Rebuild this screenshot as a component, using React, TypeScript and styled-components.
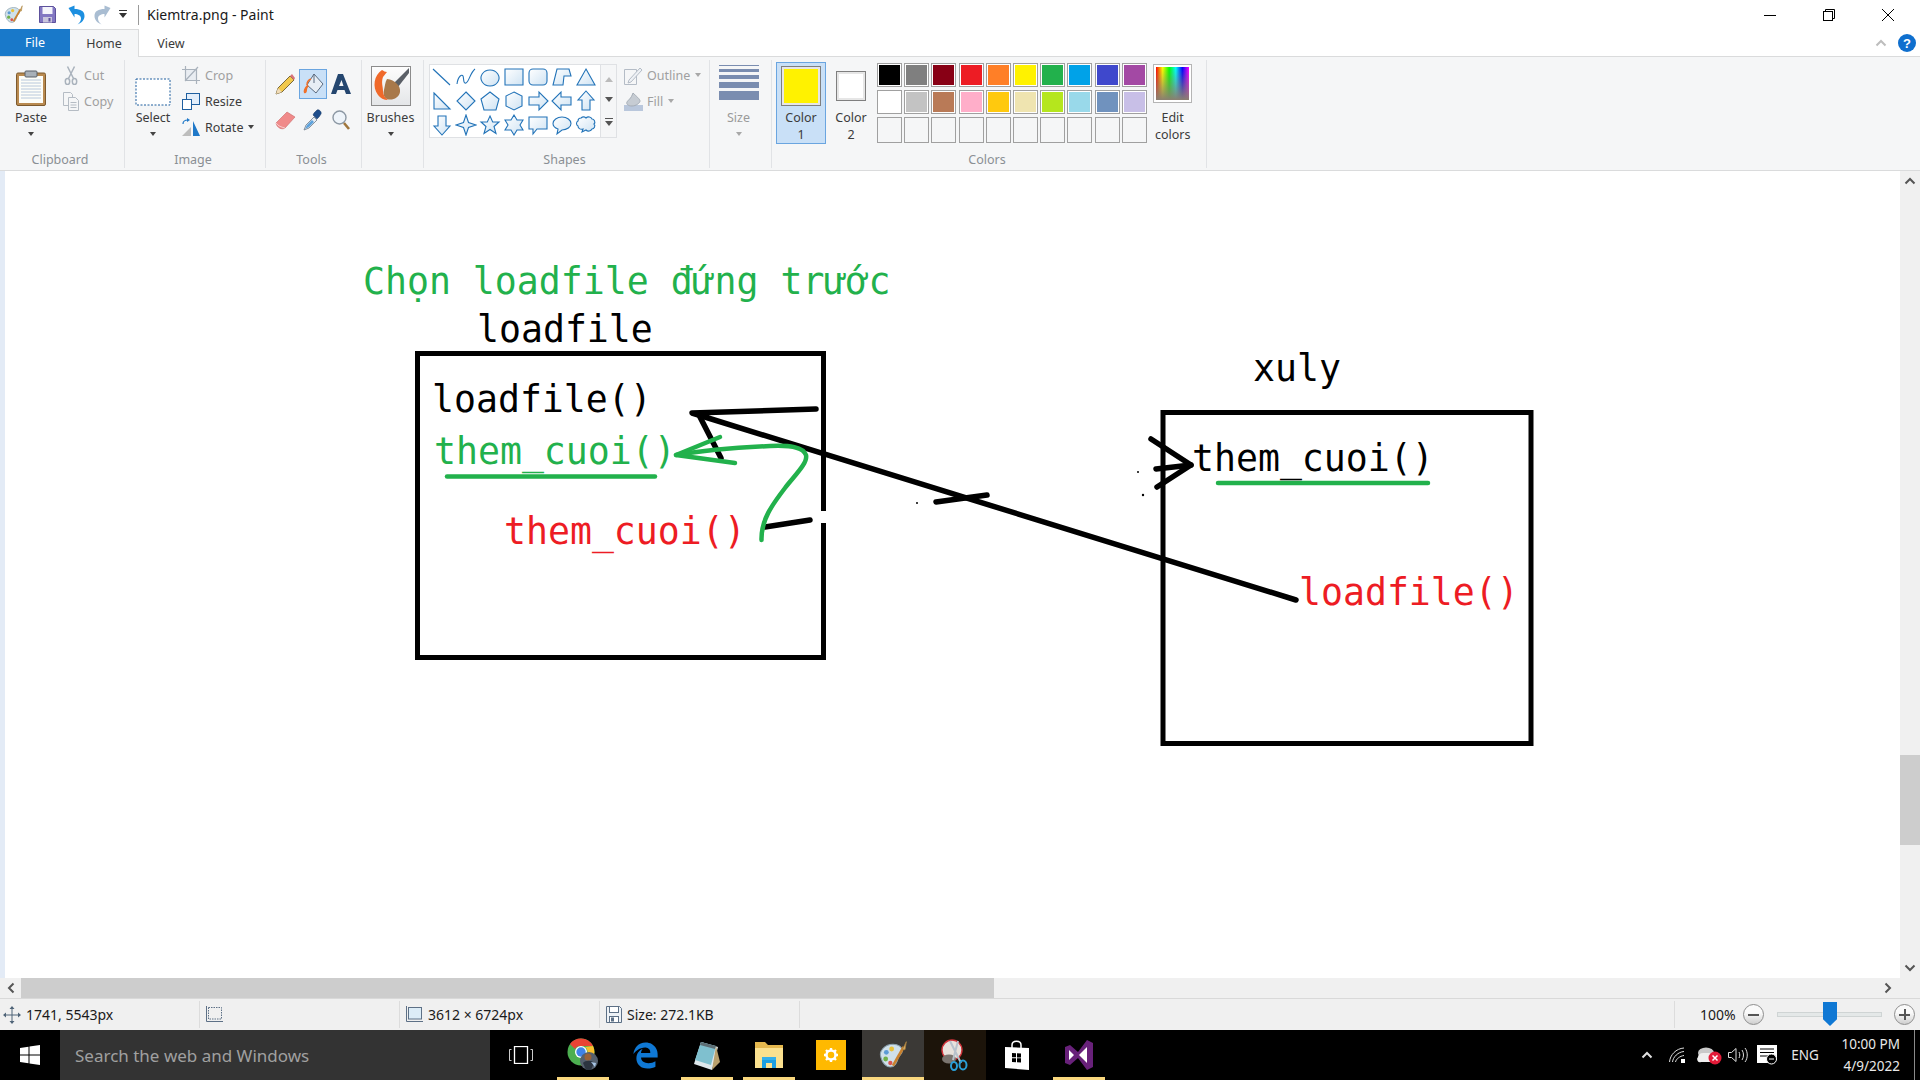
import React from 'react';
import styled, { createGlobalStyle } from 'styled-components';
import { FaEdgeLegacy } from 'react-icons/fa';

const GlobalStyle = createGlobalStyle`
  html, body {
    margin: 0;
    padding: 0;
    overflow: hidden;
    background: #fff;
  }
  * { box-sizing: border-box; }
`;

const UI_FONT = '"Noto Sans", "Liberation Sans", sans-serif';
const INK_FONT = '"DejaVu Sans Mono", monospace';

const Window = styled.div`
  width: 1920px;
  height: 1080px;
  display: flex;
  flex-direction: column;
  font-family: ${UI_FONT};
  font-size: 13px;
  color: #3b3b3b;
`;

/* title bar */
const TitleBar = styled.div`
  height: 29px;
  display: flex;
  align-items: center;
  background: #fff;
`;

const QuickIcons = styled.div`
  display: flex;
  align-items: center;
  width: 139px;
  height: 20px;
  border-right: 1px solid #9a9a9a;
`;

const QuickSlot = styled.div<{ $w: number }>`
  width: ${(p) => p.$w}px;
  height: 20px;
  display: flex;
  align-items: center;
  justify-content: center;
`;

const TitleText = styled.div`
  margin-left: 8px;
  color: #1a1a1a;
  font-size: 14px;
`;

const WinButtons = styled.div`
  margin-left: auto;
  display: flex;
  padding-right: 3px;
`;

const WinButton = styled.div`
  width: 59px;
  height: 29px;
  display: flex;
  align-items: center;
  justify-content: center;
`;

/* tabs */
const TabRow = styled.div`
  height: 28px;
  display: flex;
  align-items: stretch;
  background: #fff;
  border-bottom: 1px solid #dadbdc;
`;

const FileTab = styled.div`
  width: 70px;
  background: #1979ca;
  color: #fff;
  display: flex;
  align-items: center;
  justify-content: center;
  font-size: 12.5px;
`;

const Tab = styled.div<{ $active?: boolean }>`
  width: ${(p) => (p.$active ? 69 : 64)}px;
  height: 29px;
  padding-bottom: ${(p) => (p.$active ? 2 : 0)}px;
  display: flex;
  align-items: center;
  justify-content: center;
  font-size: 12.5px;
  color: #3b3b3b;
  background: ${(p) => (p.$active ? '#f5f6f7' : 'transparent')};
  border: ${(p) => (p.$active ? '1px solid #dadbdc' : 'none')};
  border-bottom: none;
  border-left: none;
`;

const TabTools = styled.div`
  margin-left: auto;
  display: flex;
  align-items: center;
  gap: 11px;
  padding-right: 4px;
`;

/* ribbon */
const Ribbon = styled.div`
  height: 114px;
  padding-top: 3px;
  display: flex;
  background: #f5f6f7;
  border-bottom: 1px solid #dadbdc;
`;

const Group = styled.div<{ $w: number }>`
  width: ${(p) => p.$w}px;
  height: 108px;
  display: flex;
  flex-direction: column;
  border-right: 1px solid #e1e3e6;
`;

const GroupBody = styled.div`
  height: 92px;
  display: flex;
`;

const GroupLabel = styled.div`
  height: 16px;
  line-height: 16px;
  text-align: center;
  padding-right: 4px;
  font-size: 12.5px;
  color: #8a8f94;
`;

const LargeTool = styled.div<{ $w: number; $selected?: boolean }>`
  width: ${(p) => p.$w}px;
  display: flex;
  flex-direction: column;
  align-items: center;
`;

const LargeIcon = styled.div`
  height: 49px;
  width: 100%;
  display: flex;
  align-items: flex-end;
  justify-content: center;
  padding-bottom: 3px;
`;

const LargeText = styled.div<{ $muted?: boolean }>`
  line-height: 17px;
  font-size: 12.5px;
  text-align: center;
  color: ${(p) => (p.$muted ? '#9a9a9a' : '#3b3b3b')};
`;

const Caret = styled.div<{ $muted?: boolean }>`
  width: 0;
  height: 0;
  margin: 6px auto 0;
  border-left: 3.5px solid transparent;
  border-right: 3.5px solid transparent;
  border-top: 4px solid ${(p) => (p.$muted ? '#a8a8a8' : '#444')};
`;

const SmallColumn = styled.div`
  padding-top: 2px;
  display: flex;
  flex-direction: column;
`;

const SmallRow = styled.div<{ $slot: number; $muted?: boolean }>`
  height: 26px;
  display: flex;
  align-items: center;
  font-size: 12.5px;
  color: ${(p) => (p.$muted ? '#a0a0a0' : '#3b3b3b')};

  & > svg:first-child {
    width: ${(p) => p.$slot - 4}px;
    margin-right: 4px;
    flex: none;
  }
`;

const InlineCaret = styled(Caret)`
  margin: 0 0 0 5px;
`;

const ToolGrid = styled.div`
  padding: 9px 0 0 5px;
  display: grid;
  grid-template-columns: repeat(3, 28px);
  grid-auto-rows: 30px;
  row-gap: 6px;
`;

const ToolCell = styled.div<{ $selected?: boolean }>`
  display: flex;
  align-items: center;
  justify-content: center;
  background: ${(p) => (p.$selected ? '#c9e0f7' : 'transparent')};
  border: 1px solid ${(p) => (p.$selected ? '#6aa5e0' : 'transparent')};
`;

const BrushFrame = styled.div`
  width: 40px;
  height: 40px;
  background: linear-gradient(#fdfdfd, #e4e6e8);
  border: 1px solid #8c8c8c;
`;

const Gallery = styled.div`
  margin: 4px 0 0 5px;
  height: 74px;
  display: flex;
`;

const ShapeGrid = styled.div`
  width: 172px;
  padding: 0;
  display: grid;
  grid-template-columns: repeat(7, 24px);
  grid-auto-rows: 24px;
  background: #fff;
  border: 1px solid #dfe1e4;
`;

const ShapeCell = styled.div`
  display: flex;
  align-items: center;
  justify-content: center;
`;

const GalleryScroll = styled.div`
  width: 16px;
  display: flex;
  flex-direction: column;
  align-items: center;
  justify-content: space-around;
  padding: 3px 0;
  border: 1px solid #dfe1e4;
  border-left: none;
`;

const ShapeOptions = styled.div`
  margin-left: 7px;
  padding-top: 2px;
  display: flex;
  flex-direction: column;
`;

const SizeLines = styled.div`
  width: 40px;
  display: flex;
  flex-direction: column;
`;

const SizeLine = styled.div<{ $h: number; $gap: number }>`
  height: ${(p) => p.$h}px;
  margin-top: ${(p) => p.$gap}px;
  background: #7a8db0;
`;

const SizeIcon = styled.div`
  height: 49px;
  padding-top: 5px;
  display: flex;
  justify-content: center;
`;

const ColorTool = styled.div<{ $w: number; $selected?: boolean }>`
  width: ${(p) => p.$w}px;
  height: 82px;
  margin: 2px 0 0 ${(p) => (p.$selected ? 4 : 2)}px;
  display: flex;
  flex-direction: column;
  align-items: center;
  background: ${(p) => (p.$selected ? '#c9e0f7' : 'transparent')};
  border: 1px solid ${(p) => (p.$selected ? '#6aa5e0' : 'transparent')};
`;

const ColorIconArea = styled.div`
  height: 47px;
  display: flex;
  align-items: center;
  justify-content: center;
`;

const ColorSwatch = styled.div<{ $size: number; $fill: string }>`
  width: ${(p) => p.$size}px;
  height: ${(p) => p.$size}px;
  background: ${(p) => p.$fill};
  border: 1px solid #7f7f7f;
  box-shadow: inset 0 0 0 2px #e6e6e6;
`;

const Palette = styled.div`
  margin: 3px 0 0 3px;
  display: grid;
  grid-template-columns: repeat(10, 25px);
  grid-template-rows: 24px 24px 26px;
  column-gap: 2.2px;
  row-gap: 3px;
`;

const PaletteCell = styled.div<{ $fill?: string }>`
  background: ${(p) => p.$fill || 'transparent'};
  border: 1px solid #a0a0a0;
  box-shadow: ${(p) => (p.$fill ? 'inset 0 0 0 1px #fff' : 'none')};
`;

const Spectrum = styled.div`
  width: 37px;
  height: 37px;
  border: 2px solid #fff;
  outline: 1px solid #b5b5b5;
  background:
    linear-gradient(rgba(128, 128, 128, 0), #8a7f70),
    linear-gradient(90deg, #f00, #ff0, #0f0, #0ff, #00f, #f0f);
`;

const EditTool = styled.div`
  width: 46px;
  margin-left: 3px;
  display: flex;
  flex-direction: column;
  align-items: center;
`;

const SpectrumArea = styled.div`
  height: 49px;
  padding-top: 5px;
`;

/* drawing area */
const Workspace = styled.div`
  flex: 1;
  display: flex;
  min-height: 0;
`;

const Canvas = styled.div`
  flex: 1;
  position: relative;
  overflow: hidden;
  background: #fff;
  border-left: 5px solid #e3ebf6;
`;

const InkLayer = styled.svg`
  position: absolute;
  left: -5px;
  top: 0;
`;

const InkText = styled.div<{ $x: number; $y: number; $color: string }>`
  position: absolute;
  left: ${(p) => p.$x - 5}px;
  top: ${(p) => p.$y - 171 - 29.5}px;
  font-family: ${INK_FONT};
  font-size: 36.5px;
  line-height: 36px;
  white-space: pre;
  color: ${(p) => p.$color};
`;

const VScroll = styled.div`
  width: 20px;
  display: flex;
  flex-direction: column;
  align-items: center;
  background: #f0f0f0;
`;

const ScrollEnd = styled.div`
  width: 20px;
  height: 20px;
  display: flex;
  align-items: center;
  justify-content: center;
`;

const VTrack = styled.div`
  flex: 1;
  width: 100%;
  padding-top: 564px;
`;

const VThumb = styled.div`
  height: 90px;
  background: #cdcdcd;
`;

const HScroll = styled.div`
  height: 20px;
  display: flex;
  background: #f0f0f0;
`;

const HThumb = styled.div`
  width: 973px;
  background: #cdcdcd;
`;

const HEnd = styled.div<{ $end?: boolean }>`
  width: 21px;
  margin: ${(p) => (p.$end ? '0 22px 0 auto' : '0')};
  display: flex;
  align-items: center;
  justify-content: center;
`;

/* status bar */
const StatusBar = styled.div`
  height: 32px;
  display: flex;
  background: #f0f0f0;
  border-top: 1px solid #d9d9d9;
  color: #1a1a1a;
  font-size: 14px;
`;

const StatusCell = styled.div<{ $w: number; $indent: number }>`
  width: ${(p) => p.$w}px;
  margin: 2px 0;
  padding-left: ${(p) => p.$indent}px;
  display: flex;
  align-items: center;
  gap: 5px;
  border-right: 1px solid #dcdcdc;
`;

const ZoomArea = styled.div`
  margin: 2px 0 2px auto;
  width: 246px;
  padding-left: 25px;
  display: flex;
  align-items: center;
  border-left: 1px solid #dcdcdc;
`;

const ZoomValue = styled.div`
  width: 43px;
`;

const ZoomButton = styled.div`
  width: 21px;
  height: 21px;
  border-radius: 50%;
  border: 1px solid #8f8f8f;
  background: linear-gradient(#fafafa 40%, #cfcfcf);
  display: flex;
  align-items: center;
  justify-content: center;
  color: #555;
`;

const ZoomSign = styled.div<{ $plus?: boolean }>`
  position: relative;
  width: 11px;
  height: 2px;
  background: #555;

  &::after {
    content: '';
    display: ${(p) => (p.$plus ? 'block' : 'none')};
    position: absolute;
    left: 4.5px;
    top: -4.5px;
    width: 2px;
    height: 11px;
    background: #555;
  }
`;

const ZoomTrack = styled.div`
  position: relative;
  width: 105px;
  height: 5px;
  margin: 0 12px 0 13px;
  background: #e4e8e8;
  border: 1px solid #cfd4d4;
`;

const ZoomThumb = styled.div`
  position: absolute;
  left: 45px;
  top: -11px;
  width: 14px;
  height: 24px;
  background: #0f78d4;
  clip-path: polygon(0 0, 100% 0, 100% 72%, 50% 100%, 0 72%);
`;

/* taskbar */
const Taskbar = styled.div`
  height: 50px;
  display: flex;
  background: #000;
`;

const StartButton = styled.div`
  width: 60px;
  display: flex;
  align-items: center;
  justify-content: center;
`;

const SearchBox = styled.div`
  width: 430px;
  padding-left: 15px;
  display: flex;
  align-items: center;
  background: #333;
  color: #a0a0a0;
  font-size: 17px;
`;

const TaskButton = styled.div<{ $open?: boolean; $tint?: string }>`
  position: relative;
  width: 62px;
  display: flex;
  align-items: center;
  justify-content: center;
  background: ${(p) => p.$tint || 'transparent'};

  &::after {
    content: '';
    display: ${(p) => (p.$open ? 'block' : 'none')};
    position: absolute;
    left: ${(p) => (p.$tint === '#3b3936' ? 0 : 5)}px;
    right: ${(p) => (p.$tint === '#3b3936' ? 0 : 5)}px;
    bottom: 0;
    height: 3px;
    background: #f9d77e;
  }
`;

const Tray = styled.div`
  margin-left: auto;
  display: flex;
  color: #fff;
`;

const TraySlot = styled.div<{ $w: number }>`
  width: ${(p) => p.$w}px;
  display: flex;
  align-items: center;
  justify-content: center;
`;

const TrayLabel = styled(TraySlot)`
  font-size: 13.5px;
  color: #e8e8e8;
`;

const Clock = styled.div`
  width: 89px;
  padding-right: 14px;
  display: flex;
  flex-direction: column;
  justify-content: center;
  align-items: flex-end;
  font-size: 13.5px;
  line-height: 22px;
  color: #e8e8e8;
`;

const DesktopPeek = styled.div`
  width: 6px;
  border-left: 1px solid #8a8a8a;
`;

const PaintIcon: React.FC<{ size: number }> = ({ size }) => (
  <svg width={size} height={size} viewBox="0 0 24 24">
    <path d="M3 14c-2-5 3-10 9-10 4 0 7 2 7 5 0 2-2 3-3 5-1 3-2 7-6 7-3 0-6-3-7-7z" fill="#cfe0ea" stroke="#8aa0ac" strokeWidth="0.8" />
    <circle cx="7" cy="10" r="1.8" fill="#5b9bd5" />
    <circle cx="11" cy="7.5" r="1.8" fill="#e9c13a" />
    <circle cx="6.5" cy="15" r="1.8" fill="#6fb04a" />
    <circle cx="10" cy="18" r="1.6" fill="#d9534f" />
    <path d="M12 20l8-14" stroke="#c9812e" strokeWidth="2" />
    <path d="M19 8l3-6-1 6z" fill="#d8b06a" stroke="#a37a3a" strokeWidth="0.6" />
  </svg>
);

const SaveIcon = () => (
  <svg width="17" height="17" viewBox="0 0 17 17">
    <path d="M0.5 0.5h14l2 2v14h-16z" fill="#8277c2" stroke="#5d519c" />
    <rect x="3.5" y="1" width="10" height="7" fill="#f4f4fb" />
    <rect x="4" y="11" width="9" height="5.5" fill="#c9c6dd" />
    <rect x="9.5" y="12" width="2" height="3.5" fill="#5d519c" />
  </svg>
);

const ArrowIcon: React.FC<{ color: string; flip?: boolean }> = ({ color, flip }) => (
  <svg width="17" height="20" viewBox="0 0 17 20" style={flip ? { transform: 'scaleX(-1)' } : undefined}>
    <path d="M0.5 3l6-2.5v3.5c6 0 10 2 10 7 0 4-3 7-7 8.500 2.500-2 3.500-4 3.500-6 0-3-3-4.500-6.500-4.500v3.500z" fill={color} />
  </svg>
);

const ClipboardIcon = () => (
  <svg width="30" height="36" viewBox="0 0 30 36">
    <rect x="0.5" y="3" width="29" height="32.500" rx="1.500" fill="#b98a50" stroke="#7d5a2e" />
    <rect x="3" y="6" width="24" height="27" fill="#fdfdf8" />
    {[10, 13, 16, 19, 22, 25, 28].map((y) => (
      <path key={y} d="M5 0h20" transform={`translate(0 ${y})`} stroke="#b8c8dc" />
    ))}
    <rect x="9" y="1" width="12" height="6" rx="1" fill="#a8b0b8" stroke="#5a6068" />
  </svg>
);

const CutIcon = () => (
  <svg width="13" height="19" viewBox="0 0 13 19" fill="none" stroke="#a9b2bc" strokeWidth="1.5">
    <path d="M3 0.500l6 12M10 0.500l-6 12" />
    <ellipse cx="3" cy="15.500" rx="2.200" ry="3" />
    <ellipse cx="10" cy="15.500" rx="2.200" ry="3" />
  </svg>
);

const CopyIcon = () => (
  <svg width="16" height="19" viewBox="0 0 16 19" fill="#f5f6f7" stroke="#b5bcc4">
    <path d="M0.500 0.500h7l2 2v11h-9z" />
    <path d="M5.500 5.500h7l3 3v10h-10z" />
    <path d="M7.500 10.500h6M7.500 13h6M7.500 15.500h6" />
  </svg>
);

const SelectIcon = () => (
  <svg width="36" height="28" viewBox="0 0 36 28">
    <rect x="1" y="1" width="34" height="26" fill="#fff" stroke="#1f5f9f" strokeDasharray="2 1.500" />
  </svg>
);

const CropIcon = () => (
  <svg width="18" height="18" viewBox="0 0 18 18" fill="none" stroke="#a9b2bc" strokeWidth="1.200">
    <rect x="4" y="4" width="10" height="10" fill="#e9edf2" stroke="none" />
    <path d="M3.500 0v14.500H18M0 3.500h14.500V18M3 15L16 1" />
  </svg>
);

const ResizeIcon = () => (
  <svg width="18" height="17" viewBox="0 0 18 17" fill="#fff" stroke="#1f5f9f">
    <rect x="4.500" y="0.500" width="13" height="11" fill="#e3eefa" />
    <rect x="0.500" y="6.500" width="9" height="10" />
  </svg>
);

const RotateIcon = () => (
  <svg width="18" height="18" viewBox="0 0 18 18">
    <path d="M0 18l9-9v9z" fill="#bdbdbd" />
    <path d="M11 18V3l7 15z" fill="#1f78c8" />
    <path d="M1 6c0-3 2-4 5-4" fill="none" stroke="#1f78c8" strokeWidth="1.200" />
    <path d="M5 0l3 2-3 2z" fill="#1f78c8" />
  </svg>
);

const PencilIcon = () => (
  <svg width="20" height="21" viewBox="0 0 20 21">
    <path d="M1 20l2-6L15 2l4 4L7 18z" fill="#f2c94c" stroke="#5a4a20" strokeWidth="0.800" />
    <path d="M1 20l2-6 4 4z" fill="#f1dcb8" />
    <path d="M15 2l4 4 1-2-3-4z" fill="#d9737a" />
  </svg>
);

const FillIcon = () => (
  <svg width="22" height="22" viewBox="0 0 22 22">
    <path d="M12 1l9 10-7 9-9-8z" fill="#e8eef5" stroke="#5a6b80" />
    <path d="M12 1v9" stroke="#5a6b80" />
    <path d="M5 12c-3 3-4 6-3 8 2 1 3-1 3-3 0-2 1-3 2-4z" fill="#f0702a" />
    <path d="M9 6c-3 1-4 4-4 6" fill="none" stroke="#f0702a" strokeWidth="1.500" />
  </svg>
);

const EraserIcon = () => (
  <svg width="21" height="19" viewBox="0 0 21 19">
    <path d="M1 12L12 1l8 5-10 11c-3 2-8 0-9-5z" fill="#f08a8a" stroke="#c96a6a" strokeWidth="0.600" />
    <path d="M1 12c2 3 5 4 9 5" fill="none" stroke="#fff" strokeWidth="0.800" opacity="0.7" />
  </svg>
);

const PickerIcon = () => (
  <svg width="20" height="22" viewBox="0 0 20 22">
    <path d="M1 21l2-5 8-8 3 3-8 8z" fill="#e6edf4" stroke="#6d7b8a" strokeWidth="0.800" />
    <path d="M2 20l2-4 5-5 2 2-5 5z" fill="#5da2dc" />
    <path d="M10 6l4 4 2-2 2-3c1-2-2-5-4-4l-3 3z" fill="#1f4e8c" stroke="#13345f" strokeWidth="0.500" />
  </svg>
);

const MagnifierIcon = () => (
  <svg width="18" height="20" viewBox="0 0 18 20" fill="none">
    <circle cx="7.500" cy="7.500" r="6.500" fill="#eef4fa" stroke="#8c98a4" strokeWidth="1.400" />
    <path d="M12 13l5 6" stroke="#a0763c" strokeWidth="2.600" />
  </svg>
);

const BrushIcon = () => (
  <svg width="38" height="38" viewBox="0 0 38 38">
    <path d="M37 1L22 16l4 4L37 6z" fill="#5a5f66" />
    <path d="M15 12c8 1 14 7 13 13-1 6-8 9-13 7-3-1-4-5-3-9 1-4 1-8 3-11z" fill="#a9794a" />
    <path d="M10 3C2 8 0 20 6 28c2 3 6 5 10 5-3-2-5-5-5-9 0-5-2-8 0-14l4-5c-2 0-3-1-5-2z" fill="#f0692a" />
  </svg>
);

const shapeFill = 'url(#shapeFill)';
const SHAPE_PATHS = [
  'M2 3l17 16',
  'M2 18c1-8 5-10 6-8s0 8 3 7 4-10 9-14',
  'M11 4a9 8 0 1 0 .01 0z',
  'M2 3h18v16H2z',
  'M6 3h10a4 4 0 0 1 4 4v8a4 4 0 0 1-4 4H6a4 4 0 0 1-4-4V7a4 4 0 0 1 4-4z',
  'M6 3h12l2 7h-7l-1 9H2z',
  'M11 3l9 16H2z',
  'M3 3l16 16H3z',
  'M11 2l9 9-9 9-9-9z',
  'M11 2l9 7-3 11H5L2 9z',
  'M11 2l8 4v10l-8 4-8-4V6z',
  'M2 7h10V2l9 9-9 9v-5H2z',
  'M20 7H10V2l-9 9 9 9v-5h10z',
  'M11 1l8 9h-4v10H7V10H3z',
  'M7 2h8v10h4l-8 9-8-9h4z',
  'M11 1l2.500 7.500L21 11l-7.500 2.500L11 21l-2.500-7.500L1 11l7.500-2.500z',
  'M11 2l2.700 6H20l-5 4.500 2 7-6-4-6 4 2-7L2 8h6.300z',
  'M11 1l3 5h6l-3 5 3 5h-6l-3 5-3-5H2l3-5-3-5h6z',
  'M2 3h18v12H10l-4 5v-5H2z',
  'M11 3c5 0 9 3 9 6.500S16 16 11 16l-5 4 1-5c-3-1-5-3-5-5.500C2 6 6 3 11 3z',
  'M6 4c2-2 4-1 5 0 2-2 5-1 6 1 2 0 4 3 2 5 2 2 0 5-2 5-1 2-4 3-6 1l-4 2 1-3c-3 1-5-1-5-3-2-1-2-4 0-5 0-2 1-3 3-3z',
];

const ShapeIcon: React.FC<{ d: string; open?: boolean }> = ({ d, open }) => (
  <svg width="22" height="22" viewBox="0 0 22 22">
    <path d={d} fill={open ? 'none' : shapeFill} stroke="#2273b8" strokeWidth="1.100" />
  </svg>
);

const OutlineIcon = () => (
  <svg width="19" height="19" viewBox="0 0 19 19" fill="none" stroke="#b4bcc6">
    <path d="M0.500 3.500h12v15H0.500z" fill="#f5f6f7" />
    <path d="M5 14l-1 3 3-1L18 4l-2-2z" fill="#eef1f5" />
  </svg>
);

const FillOffIcon = () => (
  <svg width="19" height="19" viewBox="0 0 19 19">
    <rect x="0" y="13" width="19" height="6" fill="#b9c7dc" />
    <path d="M9 1c3 3 7 6 7 8s-4 5-8 5-6-2-5-4 4-3 6-9z" fill="#c6ccd3" stroke="#a5adb6" />
  </svg>
);

const ChevronIcon: React.FC<{ dir: 'up' | 'down' | 'left' | 'right'; color?: string }> = ({ dir, color = '#555' }) => {
  const angle = { up: 0, right: 90, down: 180, left: 270 }[dir];
  return (
    <svg width="12" height="12" viewBox="0 0 12 12" style={{ transform: `rotate(${angle}deg)` }}>
      <path d="M1.500 8.500L6 4l4.500 4.500" fill="none" stroke={color} strokeWidth="2" />
    </svg>
  );
};

const MoveIcon = () => (
  <svg width="18" height="18" viewBox="0 0 18 18" fill="#4f6478" stroke="#4f6478">
    <path d="M9 1v16M1 9h16" fill="none" />
    <path d="M9 0l2.500 3h-5zM9 18l2.500-3h-5zM0 9l3-2.500v5zM18 9l-3-2.500v5z" stroke="none" />
  </svg>
);

const SelectionStatusIcon = () => (
  <svg width="18" height="18" viewBox="0 0 18 18" fill="none" stroke="#5d7086">
    <path d="M1.500 0v15.500H18" />
    <rect x="3.500" y="1.500" width="13" height="11.500" strokeDasharray="1.500 1" />
  </svg>
);

const CanvasStatusIcon = () => (
  <svg width="18" height="18" viewBox="0 0 18 18" stroke="#5d7086">
    <path d="M1.500 0v15.500H18" fill="none" />
    <rect x="3.500" y="1.500" width="13" height="11.500" fill="#dcecf7" />
  </svg>
);

const DiskIcon = () => (
  <svg width="16" height="17" viewBox="0 0 16 17" fill="#eef2f6" stroke="#5d7086">
    <path d="M0.500 0.500h13l2 2v14h-15z" />
    <rect x="3.500" y="0.500" width="9" height="6" fill="#fff" />
    <rect x="3.500" y="10.500" width="9" height="6" fill="#fff" />
    <rect x="5.500" y="12" width="2" height="3" fill="#5d7086" />
  </svg>
);

const WindowsLogo = () => (
  <svg width="20" height="20" viewBox="0 0 20 20" fill="#fff">
    <path d="M0 3l8.500-1.200V9.500H0zM9.500 1.600L20 0v9.500H9.500zM0 10.500h8.500v7.700L0 17zM9.500 10.500H20V20L9.500 18.400z" />
  </svg>
);

const TaskViewIcon = () => (
  <svg width="24" height="18" viewBox="0 0 24 18" fill="none" stroke="#fff">
    <rect x="5.500" y="0.500" width="13" height="17" strokeWidth="1.300" />
    <path d="M2.500 3.500H0.500v11h2M21.500 3.500h2v11h-2" strokeWidth="0.800" />
  </svg>
);

const ChromeIcon = () => (
  <svg width="32" height="34" viewBox="0 0 32 34">
    <circle cx="14" cy="14" r="13.500" fill="#4caf50" />
    <path d="M14 .5A13.500 13.500 0 0 1 26 8H14a6 6 0 0 0-6 3L3 6a13.500 13.500 0 0 1 11-5.500z" fill="#ea4335" />
    <path d="M26 8a13.500 13.500 0 0 1-12 19.500L19 18a6 6 0 0 0-1-9z" fill="#fbc02d" />
    <circle cx="14" cy="14" r="6" fill="#fff" />
    <circle cx="14" cy="14" r="4.700" fill="#3f83e8" />
    <circle cx="22" cy="23" r="9" fill="#55606e" />
    <circle cx="21" cy="19" r="3.500" fill="#9a6238" />
    <path d="M16 25c2-3 9-3 11 0l-3 7h-5z" fill="#2c3440" />
    <path d="M24 24l5 1-1 4z" fill="#a8c6e6" />
  </svg>
);

const NotepadIcon = () => (
  <svg width="28" height="32" viewBox="0 0 28 32">
    <path d="M8 3l17 5-6 23-18-6z" fill="#dfe8ec" />
    <path d="M8 3l15 4-5 19-16-5z" fill="#7fc0cf" />
    <path d="M8 3l15 4-1 3L7 6z" fill="#5d6e75" />
    <path d="M23 7l4 16-8 8z" fill="#b9a06d" />
  </svg>
);

const FolderIcon = () => (
  <svg width="28" height="28" viewBox="0 0 28 28">
    <path d="M0 1h10l3 3h15v23H0z" fill="#e5b84e" />
    <rect x="0" y="7" width="28" height="20" fill="#fbe18f" />
    <path d="M7 27v-9h14v9h-4v-5h-6v5z" fill="#1c9ee0" />
    <rect x="7" y="16" width="14" height="3" fill="#35b0ec" />
  </svg>
);

const SettingsTile = () => (
  <svg width="30" height="30" viewBox="0 0 30 30">
    <rect width="30" height="30" fill="#ffb900" />
    <circle cx="15" cy="15" r="4.500" fill="none" stroke="#fff" strokeWidth="2.500" />
    <path d="M15 8v3M15 19v3M8 15h3M19 15h3M10 10l2 2M18 18l2 2M20 10l-2 2M12 18l-2 2" stroke="#fff" strokeWidth="2.400" />
  </svg>
);

const SnipIcon = () => (
  <svg width="28" height="34" viewBox="0 0 28 34">
    <circle cx="11" cy="12" r="10" fill="#e8e2dc" stroke="#d0333a" strokeWidth="1.400" />
    <ellipse cx="8" cy="21" rx="7" ry="4.500" fill="#7a7570" />
    <path d="M9 3l11 22M17 3L12 22" stroke="#b8c2cc" strokeWidth="2" />
    <ellipse cx="22" cy="27" rx="3.500" ry="4.500" fill="none" stroke="#2a9fd6" strokeWidth="2" />
    <ellipse cx="13" cy="28" rx="3" ry="4" fill="none" stroke="#2a9fd6" strokeWidth="2" />
  </svg>
);

const StoreIcon = () => (
  <svg width="26" height="30" viewBox="0 0 26 30">
    <path d="M8 8V5c0-5 9-5 9 0v3" fill="none" stroke="#fff" strokeWidth="1.500" />
    <path d="M1 7l24 1v22L1 28z" fill="#fff" />
    <path d="M8 13l4 .2v4H8zM13 13.200l4 .2v4h-4zM8 18.300h4v4l-4-.2zM13 18.300h4v4.200l-4-.2z" fill="#000" />
  </svg>
);

const VsIcon = () => (
  <svg width="28" height="36" viewBox="0 0 28 36">
    <path d="M0 10l5-2 8 7L22 3l6 3v24l-6 3-9-12-8 7-5-2z" fill="#68217a" />
    <path d="M4 13l5 5-5 5zM22 10v16l-8-8z" fill="#fff" />
  </svg>
);

const WifiIcon = () => (
  <svg width="16" height="16" viewBox="0 0 16 16" fill="none" stroke="#ddd">
    <path d="M0.500 15C1 8 7 1.500 15 1M3.500 15C4 10 9 5 15 4.500M6.500 15C7 12 11 9 15 8.500" />
    <rect x="12" y="12" width="4" height="4" fill="#fff" stroke="none" />
  </svg>
);

const CloudErrorIcon = () => (
  <svg width="30" height="20" viewBox="0 0 30 20">
    <ellipse cx="11" cy="8" rx="8" ry="5.500" fill="#c9c9c9" />
    <path d="M3 12a5 4 0 0 1 5-4h10a5 4 0 0 1 0 9H6a3 3 0 0 1-3-5z" fill="#efefef" />
    <circle cx="20" cy="13" r="6.500" fill="#e31b38" />
    <path d="M17.500 10.500l5 5M22.500 10.500l-5 5" stroke="#fff" strokeWidth="1.500" />
  </svg>
);

const SpeakerIcon = () => (
  <svg width="20" height="16" viewBox="0 0 20 16" fill="none" stroke="#ddd">
    <path d="M0.500 5.500h3L8 1.500v13l-4.500-4h-3z" />
    <path d="M11 5c1 2 1 4 0 6M14 3c2 3 2 7 0 10M17 1c3 4 3 10 0 14" />
  </svg>
);

const NotifyIcon = () => (
  <svg width="21" height="20" viewBox="0 0 21 20">
    <path d="M0 0h20v15h-8v3H0z" fill="#fff" />
    <path d="M3 4h14M3 7.500h14M3 11h8" stroke="#000" strokeWidth="1.200" />
    <circle cx="14.500" cy="14" r="5" fill="#000" stroke="#fff" />
    <path d="M12 14h5" stroke="#fff" />
  </svg>
);

const MinimizeIcon = () => (
  <svg width="12" height="12" viewBox="0 0 12 12"><path d="M0 6.500h12" stroke="#000" /></svg>
);
const RestoreIcon = () => (
  <svg width="12" height="12" viewBox="0 0 12 12" fill="none" stroke="#000">
    <rect x="0.500" y="2.500" width="9" height="9" />
    <path d="M2.500 2.500v-2h9v9h-2" />
  </svg>
);
const CloseIcon = () => (
  <svg width="12" height="12" viewBox="0 0 12 12"><path d="M0 0l12 12M12 0L0 12" stroke="#000" /></svg>
);

const HelpIcon = () => (
  <svg width="18" height="18" viewBox="0 0 18 18">
    <circle cx="9" cy="9" r="9" fill="#0f6fce" />
    <text x="9" y="14" textAnchor="middle" fill="#fff" fontSize="13" fontWeight="700" fontFamily="Liberation Sans">?</text>
  </svg>
);

const PALETTE = [
  '#000000', '#7f7f7f', '#880015', '#ed1c24', '#ff7f27', '#fff200', '#22b14c', '#00a2e8', '#3f48cc', '#a349a4',
  '#ffffff', '#c3c3c3', '#b97a57', '#ffaec9', '#ffc90e', '#efe4b0', '#b5e61d', '#99d9ea', '#7092be', '#c8bfe7',
  '', '', '', '', '', '', '', '', '', '',
];

const SIZE_LINES = [
  { h: 1, gap: 0 },
  { h: 3, gap: 3 },
  { h: 4, gap: 3 },
  { h: 6, gap: 3 },
  { h: 9, gap: 3 },
];

const INK_LINES = [
  'M816 409L692 413L1296 600',
  'M700 417L721 458',
  'M765 527L810 520',
  'M936 502L987 495',
  'M1151 439L1191 465L1157 487',
  'M1156 469L1191 465',
];

const INK_LABELS = [
  { x: 363, y: 293, color: '#22b14c', text: 'Chọn loadfile đứng trước' },
  { x: 477, y: 341, color: '#000', text: 'loadfile' },
  { x: 432, y: 411, color: '#000', text: 'loadfile()' },
  { x: 434, y: 463, color: '#22b14c', text: 'them_cuoi()' },
  { x: 504, y: 543, color: '#ed1c24', text: 'them_cuoi()' },
  { x: 1253, y: 380, color: '#000', text: 'xuly' },
  { x: 1192, y: 470, color: '#000', text: 'them_cuoi()' },
  { x: 1299, y: 604, color: '#ed1c24', text: 'loadfile()' },
];

const Drawing = () => (
  <>
    <InkLayer width="1900" height="807" viewBox="0 171 1900 807">
      <g fill="none" stroke="#000" strokeWidth="5">
        <rect x="417.500" y="353.500" width="406" height="304" />
        <rect x="1163" y="412.500" width="368" height="331" />
      </g>
      <rect x="820" y="511" width="10" height="12" fill="#fff" />
      <g fill="none" stroke="#000" strokeWidth="5.500" strokeLinecap="round" strokeLinejoin="round">
        {INK_LINES.map((d) => <path key={d} d={d} />)}
      </g>
      <g fill="none" stroke="#22b14c" strokeWidth="4.500" strokeLinecap="round" strokeLinejoin="round">
        <path d="M447 476.500H655" />
        <path d="M1218 483H1428" />
        <path d="M720 437L676 455L735 463" />
        <path d="M676 455C700 451 730 448 770 446C790 445 803 447 806 455C808 463 795 475 785 488C772 505 761 520 761.500 540" />
      </g>
      <g fill="#000">
        <circle cx="1138" cy="472" r="1" />
        <circle cx="1143" cy="495" r="1.200" />
        <circle cx="917" cy="503" r="1" />
      </g>
    </InkLayer>
    {INK_LABELS.map((l) => (
      <InkText key={l.x + l.text} $x={l.x} $y={l.y} $color={l.color}>{l.text}</InkText>
    ))}
  </>
);

const App: React.FC = () => {
  return (
    <Window>
      <GlobalStyle />
      <TitleBar>
        <QuickIcons>
          <QuickSlot $w={26}><PaintIcon size={21} /></QuickSlot>
          <QuickSlot $w={42}><SaveIcon /></QuickSlot>
          <QuickSlot $w={17}><ArrowIcon color="#1c8fe0" /></QuickSlot>
          <QuickSlot $w={34}><ArrowIcon color="#a9bdd2" flip /></QuickSlot>
          <QuickSlot $w={8}>
            <svg width="8" height="9" viewBox="0 0 8 9"><path d="M0 0h8v1H0zM0 3h8L4 8z" fill="#333" /></svg>
          </QuickSlot>
        </QuickIcons>
        <TitleText>Kiemtra.png - Paint</TitleText>
        <WinButtons>
          <WinButton><MinimizeIcon /></WinButton>
          <WinButton><RestoreIcon /></WinButton>
          <WinButton><CloseIcon /></WinButton>
        </WinButtons>
      </TitleBar>

      <TabRow>
        <FileTab>File</FileTab>
        <Tab $active>Home</Tab>
        <Tab>View</Tab>
        <TabTools>
          <ChevronIcon dir="up" color="#bdbdbd" />
          <HelpIcon />
        </TabTools>
      </TabRow>

      <Ribbon>
        <Group $w={125}>
          <GroupBody>
            <LargeTool $w={62}>
              <LargeIcon><ClipboardIcon /></LargeIcon>
              <LargeText>Paste</LargeText>
              <Caret />
            </LargeTool>
            <SmallColumn>
              <SmallRow $slot={22} $muted><CutIcon />Cut</SmallRow>
              <SmallRow $slot={22} $muted><CopyIcon />Copy</SmallRow>
            </SmallColumn>
          </GroupBody>
          <GroupLabel>Clipboard</GroupLabel>
        </Group>

        <Group $w={141}>
          <GroupBody>
            <LargeTool $w={56}>
              <LargeIcon><SelectIcon /></LargeIcon>
              <LargeText>Select</LargeText>
              <Caret />
            </LargeTool>
            <SmallColumn>
              <SmallRow $slot={24} $muted><CropIcon />Crop</SmallRow>
              <SmallRow $slot={24}><ResizeIcon />Resize</SmallRow>
              <SmallRow $slot={24}><RotateIcon />Rotate<InlineCaret /></SmallRow>
            </SmallColumn>
          </GroupBody>
          <GroupLabel>Image</GroupLabel>
        </Group>

        <Group $w={96}>
          <GroupBody>
            <ToolGrid>
              <ToolCell><PencilIcon /></ToolCell>
              <ToolCell $selected><FillIcon /></ToolCell>
              <ToolCell>
                <svg width="20" height="20" viewBox="0 0 20 20"><path d="M0 20l7-20h5l8 20h-5l-1.500-4H6.500L5 20zM8 12h4.500l-2-6z" fill="#24466f" /></svg>
              </ToolCell>
              <ToolCell><EraserIcon /></ToolCell>
              <ToolCell><PickerIcon /></ToolCell>
              <ToolCell><MagnifierIcon /></ToolCell>
            </ToolGrid>
          </GroupBody>
          <GroupLabel>Tools</GroupLabel>
        </Group>

        <Group $w={62}>
          <GroupBody>
            <LargeTool $w={57}>
              <LargeIcon><BrushFrame><BrushIcon /></BrushFrame></LargeIcon>
              <LargeText>Brushes</LargeText>
              <Caret />
            </LargeTool>
          </GroupBody>
          <GroupLabel>&nbsp;</GroupLabel>
        </Group>

        <Group $w={286}>
          <GroupBody>
            <Gallery>
              <ShapeGrid>
                {SHAPE_PATHS.map((d, i) => (
                  <ShapeCell key={d}>
                    {i === 0 ? (
                      <svg width="0" height="0" style={{ position: 'absolute' }}>
                        <defs>
                          <linearGradient id="shapeFill" x1="0" y1="0" x2="1" y2="1">
                            <stop offset="0" stopColor="#fff" />
                            <stop offset="1" stopColor="#cfe3f3" />
                          </linearGradient>
                        </defs>
                      </svg>
                    ) : null}
                    <ShapeIcon d={d} open={i < 2} />
                  </ShapeCell>
                ))}
              </ShapeGrid>
              <GalleryScroll>
                <svg width="8" height="6" viewBox="0 0 8 6"><path d="M0 6l4-5 4 5z" fill="#bbb" /></svg>
                <svg width="8" height="6" viewBox="0 0 8 6"><path d="M0 0l4 5 4-5z" fill="#555" /></svg>
                <svg width="8" height="8" viewBox="0 0 8 8"><path d="M0 0h8v1H0zM0 3h8L4 8z" fill="#555" /></svg>
              </GalleryScroll>
            </Gallery>
            <ShapeOptions>
              <SmallRow $slot={23} $muted><OutlineIcon />Outline<InlineCaret $muted /></SmallRow>
              <SmallRow $slot={23} $muted><FillOffIcon />Fill<InlineCaret $muted /></SmallRow>
            </ShapeOptions>
          </GroupBody>
          <GroupLabel>Shapes</GroupLabel>
        </Group>

        <Group $w={62}>
          <GroupBody>
            <LargeTool $w={57}>
              <SizeIcon>
                <SizeLines>
                  {SIZE_LINES.map((l) => <SizeLine key={l.h} $h={l.h} $gap={l.gap} />)}
                </SizeLines>
              </SizeIcon>
              <LargeText $muted>Size</LargeText>
              <Caret $muted />
            </LargeTool>
          </GroupBody>
          <GroupLabel>&nbsp;</GroupLabel>
        </Group>

        <Group $w={435}>
          <GroupBody>
            <ColorTool $w={50} $selected>
              <ColorIconArea><ColorSwatch $size={40} $fill="#fff200" /></ColorIconArea>
              <LargeText>Color<br />1</LargeText>
            </ColorTool>
            <ColorTool $w={46}>
              <ColorIconArea><ColorSwatch $size={30} $fill="#fff" /></ColorIconArea>
              <LargeText>Color<br />2</LargeText>
            </ColorTool>
            <Palette>
              {PALETTE.map((c, i) => <PaletteCell key={i} $fill={c} />)}
            </Palette>
            <EditTool>
              <SpectrumArea><Spectrum /></SpectrumArea>
              <LargeText>Edit<br />colors</LargeText>
            </EditTool>
          </GroupBody>
          <GroupLabel>Colors</GroupLabel>
        </Group>
      </Ribbon>

      <Workspace>
        <Canvas><Drawing /></Canvas>
        <VScroll>
          <ScrollEnd><ChevronIcon dir="up" /></ScrollEnd>
          <VTrack><VThumb /></VTrack>
          <ScrollEnd><ChevronIcon dir="down" /></ScrollEnd>
        </VScroll>
      </Workspace>

      <HScroll>
        <HEnd><ChevronIcon dir="left" /></HEnd>
        <HThumb />
        <HEnd $end><ChevronIcon dir="right" /></HEnd>
      </HScroll>

      <StatusBar>
        <StatusCell $w={200} $indent={3}><MoveIcon />1741, 5543px</StatusCell>
        <StatusCell $w={200} $indent={5}><SelectionStatusIcon /></StatusCell>
        <StatusCell $w={200} $indent={5}><CanvasStatusIcon />3612 × 6724px</StatusCell>
        <StatusCell $w={200} $indent={6}><DiskIcon />Size: 272.1KB</StatusCell>
        <ZoomArea>
          <ZoomValue>100%</ZoomValue>
          <ZoomButton><ZoomSign /></ZoomButton>
          <ZoomTrack><ZoomThumb /></ZoomTrack>
          <ZoomButton><ZoomSign $plus /></ZoomButton>
        </ZoomArea>
      </StatusBar>

      <Taskbar>
        <StartButton><WindowsLogo /></StartButton>
        <SearchBox>Search the web and Windows</SearchBox>
        <TaskButton><TaskViewIcon /></TaskButton>
        <TaskButton $open><ChromeIcon /></TaskButton>
        <TaskButton><FaEdgeLegacy size={27} color="#0f78d4" /></TaskButton>
        <TaskButton $open><NotepadIcon /></TaskButton>
        <TaskButton $open><FolderIcon /></TaskButton>
        <TaskButton><SettingsTile /></TaskButton>
        <TaskButton $open $tint="#3b3936"><PaintIcon size={32} /></TaskButton>
        <TaskButton $tint="#1c140a"><SnipIcon /></TaskButton>
        <TaskButton><StoreIcon /></TaskButton>
        <TaskButton $open><VsIcon /></TaskButton>
        <Tray>
          <TraySlot $w={30}><ChevronIcon dir="up" color="#e0e0e0" /></TraySlot>
          <TraySlot $w={30}><WifiIcon /></TraySlot>
          <TraySlot $w={35}><CloudErrorIcon /></TraySlot>
          <TraySlot $w={22}><SpeakerIcon /></TraySlot>
          <TraySlot $w={36}><NotifyIcon /></TraySlot>
          <TrayLabel $w={40}>ENG</TrayLabel>
          <Clock>
            <div>10:00 PM</div>
            <div>4/9/2022</div>
          </Clock>
          <DesktopPeek />
        </Tray>
      </Taskbar>
    </Window>
  );
};

export default App;
